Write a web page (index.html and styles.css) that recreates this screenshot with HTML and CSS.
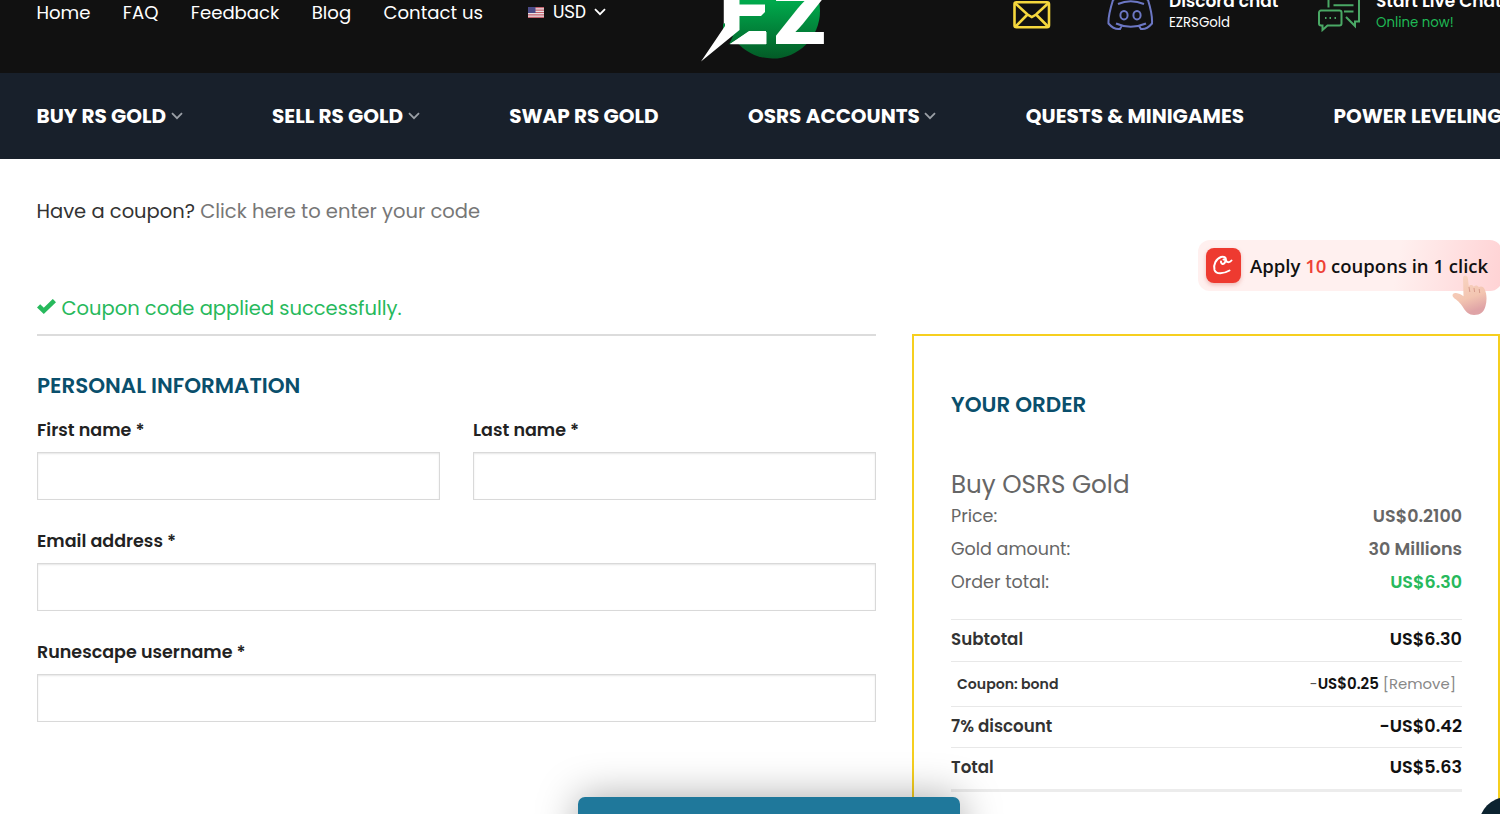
FILE: index.html
```html
<!DOCTYPE html>
<html lang="en">
  <head>
    <meta charset="UTF-8" />
    <meta name="viewport" content="width=device-width, initial-scale=1.0" />
    <title>Checkout - EZ RS Gold</title>
    <link rel="stylesheet" href="styles.css">
  </head>
  <body>
    <header class="top-bar">
      <nav class="top-menu">
        <a>Home</a>
        <a>FAQ</a>
        <a>Feedback</a>
        <a>Blog</a>
        <a>Contact us</a>
      </nav>
      <div class="currency">
        <svg width="16" height="11" viewBox="0 0 16 11">
          <rect width="16" height="11" fill="#e9dfe3" />
          <path d="M0 .7h16M0 3.1h16M0 5.5h16M0 7.9h16M0 10.3h16" stroke="#c4606c" stroke-width="1.2" />
          <rect width="7.5" height="6" fill="#4b4a86" />
        </svg>
        <span>USD</span>
        <svg class="caret" width="12" height="8" viewBox="0 0 12 8"><path d="M1 1.2l5 5 5-5" /></svg>
      </div>
      <div class="logo">
        <svg width="126" height="73" viewBox="699 0 126 73">
          <defs>
            <linearGradient id="ball" gradientUnits="userSpaceOnUse" x1="0" y1="-36" x2="0" y2="58">
              <stop offset="0.4" stop-color="#00a94c" />
              <stop offset="1" stop-color="#035c27" />
            </linearGradient>
          </defs>
          <circle cx="771.5" cy="11" r="47.5" fill="url(#ball)" />
          <text class="logo-text" x="719" y="44" textLength="50" lengthAdjust="spacingAndGlyphs">E</text>
          <text class="logo-text" x="771" y="44" textLength="56" lengthAdjust="spacingAndGlyphs">Z</text>
          <path d="M738 0h29v31h-18L728 44.5h-6V24l16-7z" fill="url(#ball)" />
          <path d="M732 36l-4 8.5-8 4V32z" fill="#111" />
          <path d="M748 31L729 44.3h36V31z" fill="#fff" />
          <path d="M724 0h14.500v30L700 61.5 724 26z" fill="#fff" />
          <path d="M738 4.500h26v7.500l-4 4h-22z" fill="#fff" />
        </svg>
      </div>
      <div class="contacts">
        <svg class="mail" width="38" height="29" viewBox="0 0 38 29">
          <rect x="1.5" y="2.2" width="34.5" height="25" rx="2" />
          <path d="M2 3l12.500 11.500 4.300 2.500 4.300-2.500L35.500 3M2.500 26.500l12-12M35 26.500l-12-12" />
        </svg>
        <div class="contact discord">
          <svg width="48" height="40" viewBox="0 0 48 40">
            <path d="M11 12q12.500-5.500 26 0M9 31.500q14.500 6.500 30 0M14.500 34l-1.500 3c-4 .6-8.500-2-11.500-5.500C1 24 3.500 16 6 8c4-3 6-3 10-4l2 3h11l2-3c4 1 6 1 10 4 2.500 8 4.500 16 4 23.500-3 3.500-7 6.100-11 5.500l-2-3" />
            <ellipse cx="17" cy="23.2" rx="3.6" ry="4.2" />
            <ellipse cx="30" cy="23.2" rx="3.6" ry="4.2" />
          </svg>
          <div><b>Discord chat</b><span>EZRSGold</span></div>
        </div>
        <div class="contact live">
          <svg width="42" height="40" viewBox="0 0 42 40">
            <path d="M10.500 15.500V1h30.500v28.500h-4V34L28 25M15.500 13.200h20M26 19.500h9.500" />
            <path d="M3 18.500h18.500a2 2 0 0 1 2 2v11a2 2 0 0 1-2 2H9.500l-5 4.500v-4.500H3a2 2 0 0 1-2-2v-11a2 2 0 0 1 2-2z" />
            <path d="M7 26h1.500M11.500 26H13M16.500 26H18" />
          </svg>
          <div><b>Start Live Chat</b><span>Online now!</span></div>
        </div>
      </div>
    </header>

    <nav class="main-nav">
      <a>BUY RS GOLD<svg class="caret" width="12" height="8" viewBox="0 0 12 8"><path d="M1 1.2l5 5 5-5" /></svg></a>
      <a>SELL RS GOLD<svg class="caret" width="12" height="8" viewBox="0 0 12 8"><path d="M1 1.2l5 5 5-5" /></svg></a>
      <a>SWAP RS GOLD</a>
      <a>OSRS ACCOUNTS<svg class="caret" width="12" height="8" viewBox="0 0 12 8"><path d="M1 1.2l5 5 5-5" /></svg></a>
      <a>QUESTS &amp; MINIGAMES</a>
      <a>POWER LEVELING</a>
    </nav>

    <main class="checkout">
      <p class="coupon-toggle"><span>Have a coupon?</span> <a>Click here to enter your code</a></p>
      <p class="message">
        <svg width="19" height="15" viewBox="0 0 19 15"><path d="M1.600 6.800l5.200 5L17.400 1.600" /></svg>
        <span>Coupon code applied successfully.</span>
      </p>

      <div class="columns">
        <form class="billing">
          <h3>PERSONAL INFORMATION</h3>
          <div class="fields">
            <label class="field"><span>First name *</span><input type="text" /></label>
            <label class="field"><span>Last name *</span><input type="text" /></label>
            <label class="field wide"><span>Email address *</span><input type="text" /></label>
            <label class="field wide"><span>Runescape username *</span><input type="text" /></label>
          </div>
        </form>

        <section class="order">
          <h3>YOUR ORDER</h3>
          <h4>Buy OSRS Gold</h4>
          <div class="detail"><span>Price:</span><b>US$0.2100</b></div>
          <div class="detail"><span>Gold amount:</span><b>30 Millions</b></div>
          <div class="detail"><span>Order total:</span><b class="green">US$6.30</b></div>
          <div class="totals">
            <div class="row"><span>Subtotal</span><b>US$6.30</b></div>
            <div class="row coupon"><span>Coupon: bond</span><div>-<b>US$0.25</b> <a>[Remove]</a></div></div>
            <div class="row"><span>7% discount</span><b>-US$0.42</b></div>
            <div class="row"><span>Total</span><b>US$5.63</b></div>
          </div>
        </section>
      </div>
    </main>

    <div class="coupon-popup">
      <svg class="badge" width="35" height="35" viewBox="0 0 35 35">
        <rect width="35" height="35" rx="8" fill="#ee3a30" />
        <path d="M15 13.500c-.5 2.500 2 3 3.500 1.500 1.800-2 1-4-1-3.500M25.500 12.500c-2 2.500-5.500 2-5.500-.5 0-2.500-2-4-5-3-5 1.800-8 8-6.500 13 1.500 4.500 9 4 15 .5" />
      </svg>
      <span>Apply <em>10</em> coupons in 1 click</span>
      <svg class="hand" width="37" height="42" viewBox="0 0 37 42">
        <defs>
          <linearGradient id="skin" x1="0" y1="0" x2="0.3" y2="1">
            <stop offset="0" stop-color="#f9d6c4" />
            <stop offset="0.65" stop-color="#f3c5b1" />
            <stop offset="1" stop-color="#dfa3a6" />
          </linearGradient>
        </defs>
        <path d="M12 3c0-3.500 4.500-3.500 4.800 0l1 8.500c1-2 4-2 5 .3 1.500-2 4-1.500 5 .5 2-1.500 5-.5 5.700 1.700 2.500 5 2.500 12 1 17-1.500 6-5 9-11.500 9-5 0-8-3-10.500-7-2.500-4-4.500-6.500-9-9.500-3.500-2.500-2-6 1.500-5.500 3 .3 5 1.500 7.500 3.300z" fill="url(#skin)" />
        <path d="M18 12l.8 5M23 13l.6 4M28.200 14l.5 4" stroke="#d79c8c" fill="none" />
      </svg>
    </div>
    <div class="bottom-panel"></div>
    <div class="chat-bubble"></div>
  </body>
</html>
```
FILE: styles.css
```css
* {
  box-sizing: border-box;
}

html {
  overflow: hidden;
}

body {
  margin: 0;
  height: 814px;
  overflow: hidden;
  position: relative;
  background: #fff;
  font-family: Poppins, Inter, "Liberation Sans", sans-serif;
  color: #333;
}

h3,
h4,
p {
  margin: 0;
}

svg {
  display: block;
  flex: none;
}

.caret {
  fill: none;
  stroke: currentColor;
  stroke-width: 1.8;
}

/* header */
.top-bar {
  display: flex;
  height: 73px;
  padding-left: 36.5px;
  background: #111;
  color: #fff;
  overflow: hidden;
  white-space: nowrap;
}

.top-bar > * {
  flex: none;
}

.top-menu {
  display: flex;
  gap: 32.4px;
  width: 491.5px;
  font-size: 18.1px;
  line-height: 26px;
}

.currency {
  display: flex;
  align-items: center;
  height: 24px;
  width: 171.5px;
  font-family: Roboto, sans-serif;
  font-size: 17.5px;
}

.currency span {
  margin: 0 8px 0 9px;
}

.logo {
  width: 313.5px;
}

.logo-text {
  font-family: Inter, sans-serif;
  font-weight: 900;
  font-size: 76px;
  fill: #fff;
}

.contacts {
  display: flex;
}

.contacts svg {
  fill: none;
  stroke-width: 2;
}

.mail {
  stroke: #f5d73d;
  margin-right: 56px;
}

.contacts .mail {
  stroke-width: 2.6;
}

.contact {
  display: flex;
  margin-top: -8px;
}

.contact b {
  display: block;
  font-size: 17px;
  font-weight: 600;
  line-height: 18px;
}

.contact span {
  display: block;
  font-size: 13.3px;
  line-height: 20px;
  margin-top: 3px;
}

.discord {
  width: 211px;
  gap: 14px;
}

.discord svg {
  stroke: #6c77c4;
}

.live {
  gap: 16px;
}

.live svg {
  stroke: #4aa865;
}

.live span {
  color: #1fb955;
}

/* main navigation */
.main-nav {
  display: flex;
  align-items: center;
  gap: 89.5px;
  height: 86px;
  padding-left: 36.5px;
  background: #18202b;
  color: #fff;
  font-size: 20px;
  font-weight: 700;
  white-space: nowrap;
  overflow: hidden;
}

.main-nav a {
  display: flex;
  align-items: center;
  flex: none;
}

.main-nav .caret {
  margin-left: 4.5px;
  color: #9a9fa6;
}

/* coupon messages */
.checkout {
  padding-left: 37px;
}

.coupon-toggle {
  margin-left: -0.5px;
  padding-top: 38px;
  font-size: 19.5px;
  line-height: 30px;
}

.coupon-toggle a {
  color: #777;
}

.message {
  display: flex;
  align-items: center;
  gap: 5.5px;
  margin-top: 66px;
  height: 30px;
  font-size: 19.5px;
  color: #27b95c;
}

.message svg {
  margin-top: -3px;
  fill: none;
  stroke: #27b95c;
  stroke-width: 4.6;
}

/* columns */
.columns {
  display: grid;
  grid-template-columns: 839px 588px;
  gap: 36px;
  margin-top: 11px;
}

h3 {
  color: #0a4f6c;
  font-size: 21.45px;
  font-weight: 600;
  line-height: 30px;
}

.billing {
  border-top: 2px solid #dcdcdc;
  padding-top: 35px;
}

.fields {
  display: grid;
  grid-template-columns: 403px 403px;
  column-gap: 33px;
  row-gap: 29px;
  margin-top: 17px;
}

.field {
  display: block;
}

.wide {
  grid-column: span 2;
}

.field span {
  display: block;
  margin-bottom: 10px;
  color: #222;
  font-size: 17.5px;
  font-weight: 600;
  line-height: 24px;
}

.field input {
  display: block;
  width: 100%;
  height: 48px;
  border: 1px solid #d9d9d9;
  background: #fff;
  box-shadow: inset 0 1px 2px rgba(0, 0, 0, 0.1);
}

/* order box */
.order {
  height: 480px;
  padding: 54px 36px 0 37px;
  border: 2px solid #f6cf1f;
  border-bottom: 0;
}

.order h4 {
  margin-top: 50px;
  color: #666;
  font-size: 24.6px;
  font-weight: 400;
  line-height: 30px;
}

.detail {
  display: flex;
  justify-content: space-between;
  height: 33px;
  color: #666;
  font-size: 17.5px;
  line-height: 33px;
}

.detail b,
.row b {
  font-weight: 600;
}

.detail .green {
  color: #27b95c;
}

.totals {
  margin-top: 20px;
  border-bottom: 3px solid #ececec;
}

.row {
  display: flex;
  justify-content: space-between;
  height: 41.5px;
  border-top: 1px solid #e8e8e8;
  color: #333;
  font-size: 16.7px;
  font-weight: 600;
  line-height: 39px;
}

.row b {
  color: #111;
  font-size: 17.6px;
}

.coupon {
  height: 45px;
  padding: 0 6px;
  font-size: 14.1px;
  line-height: 44px;
}

.coupon div {
  color: #555;
  font-weight: 400;
}

.coupon b {
  font-size: 15px;
}

.coupon a {
  color: #888;
  font-size: 14.9px;
}

/* floating elements */
.coupon-popup {
  position: absolute;
  left: 1198px;
  top: 240px;
  display: flex;
  align-items: center;
  gap: 9px;
  width: 304px;
  height: 51px;
  padding-left: 8px;
  border-radius: 12px;
  background: linear-gradient(100deg, #fff0ef 65%, #ffd2d4);
  color: #111;
  font-family: "Open Sans", sans-serif;
  font-size: 18.5px;
  font-weight: 600;
  white-space: nowrap;
}

.coupon-popup em {
  color: #ee4136;
  font-style: normal;
}

.badge {
  filter: drop-shadow(0 2px 2px rgba(200, 60, 50, 0.3));
}

.badge path {
  fill: none;
  stroke: #fff;
  stroke-width: 2;
  stroke-linecap: round;
}

.hand {
  position: absolute;
  left: 253px;
  top: 35px;
}

.bottom-panel {
  position: absolute;
  left: 578px;
  top: 797px;
  width: 382px;
  height: 60px;
  border-radius: 7px;
  background: #1f789b;
  box-shadow: 0 0 40px rgba(0, 0, 0, 0.34);
}

.chat-bubble {
  position: absolute;
  left: 1479px;
  top: 797px;
  width: 56px;
  height: 56px;
  border-radius: 50%;
  background: #0c2330;
}
```
